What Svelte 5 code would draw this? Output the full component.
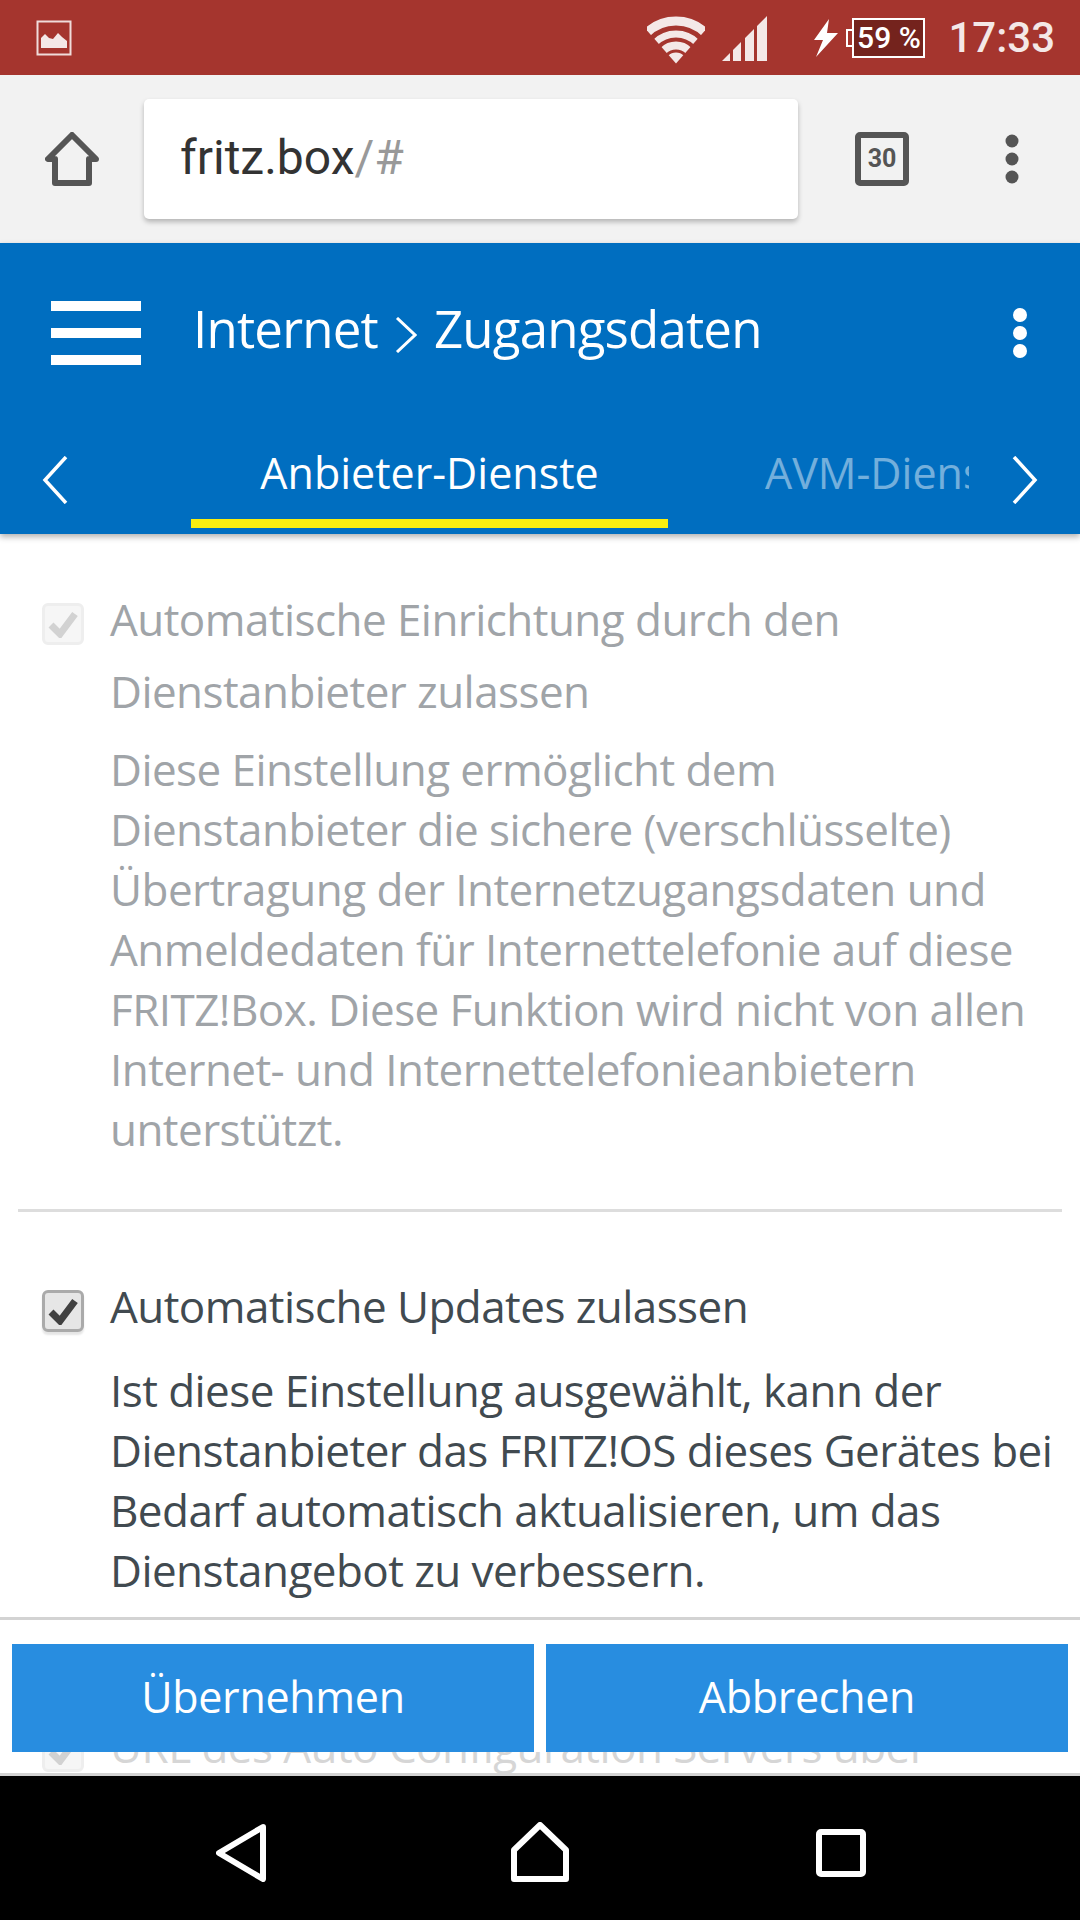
<script>
	const first = [
		'Diese Einstellung ermöglicht dem',
		'Dienstanbieter die sichere (verschlüsselte)',
		'Übertragung der Internetzugangsdaten und',
		'Anmeldedaten für Internettelefonie auf diese',
		'FRITZ!Box. Diese Funktion wird nicht von allen',
		'Internet- und Internettelefonieanbietern',
		'unterstützt.'
	];
	const second = [
		'Ist diese Einstellung ausgewählt, kann der',
		'Dienstanbieter das FRITZ!OS dieses Gerätes bei',
		'Bedarf automatisch aktualisieren, um das',
		'Dienstangebot zu verbessern.'
	];
</script>

<div class="screen">
	<div class="status">
		<svg class="thumb" width="36" height="36" viewBox="0 0 36 36">
			<rect x="1.500" y="1.500" width="33" height="33" fill="none" stroke="#f0dcda" stroke-width="2" />
			<path d="M5 28V18l4-4 4 4 4 1 5-6 4 4 5 4v7z" fill="#f4e8e7" />
		</svg>
		<svg class="wifi" width="58" height="48" viewBox="0 0 58 48">
			<clipPath id="wedge"><path d="M29 47.500-12 1V-2H70V1z" /></clipPath>
			<g clip-path="url(#wedge)" fill="none" stroke="#f4e8e7">
				<circle cx="29" cy="47.500" r="5.500" stroke-width="11" />
				<circle cx="29" cy="47.500" r="18" stroke-width="8" />
				<circle cx="29" cy="47.500" r="29.500" stroke-width="7" />
				<circle cx="29" cy="47.500" r="42.500" stroke-width="9" />
			</g>
		</svg>
		<svg class="signal" width="45" height="45" viewBox="0 0 45 45">
			<path d="M0 45 8 37V45zM11 34l8-8V45H11zM23 22l9-9V45H23zM35 10 45 0V45H35z" fill="#f4e8e7" />
		</svg>
		<svg class="bolt" width="24" height="38" viewBox="0 0 24 38">
			<path d="M15 0 0 21h9L2 38 24 14H13z" fill="#fff" />
		</svg>
		<div class="battery">
			<span class="nub"></span>
			<span class="cell">59 %</span>
		</div>
		<span class="time">17:33</span>
	</div>

	<div class="browser">
		<svg class="home" width="54" height="54" viewBox="0 0 54 54">
			<path d="M27 3 3 27h7v24h34V27h7z" fill="none" stroke="#555" stroke-width="6" stroke-linejoin="round" />
		</svg>
		<div class="url"><span>fritz.box</span><span class="rest">/#</span></div>
		<div class="tabs">30</div>
		<svg class="more" width="14" height="50" viewBox="0 0 14 50">
			<circle cx="7" cy="7" r="6.500" /><circle cx="7" cy="25" r="6.500" /><circle cx="7" cy="43" r="6.500" />
		</svg>
	</div>

	<header class="appbar">
		<div class="titlerow">
			<div class="burger"><i></i><i></i><i></i></div>
			<h1>
				<span>Internet</span>
				<svg class="crumb" width="22" height="36" viewBox="0 0 22 36"><path d="M2 1 20 18 2 35" fill="none" stroke="#fff" stroke-width="3" /></svg>
				<span>Zugangsdaten</span>
			</h1>
			<svg class="dots" width="14" height="50" viewBox="0 0 14 50" fill="#fff">
				<circle cx="7" cy="7" r="7" /><circle cx="7" cy="25" r="7" /><circle cx="7" cy="43" r="7" />
			</svg>
		</div>
		<div class="tabrow">
			<svg width="26" height="48" viewBox="0 0 26 48"><path d="M24 1 3 24l21 23" fill="none" stroke="#fff" stroke-width="3.500" /></svg>
			<div class="tablist">
				<div class="tab active">Anbieter-Dienste</div>
				<div class="tab next">AVM-Dienste</div>
			</div>
			<svg width="26" height="48" viewBox="0 0 26 48"><path d="M2 1l21 23L2 47" fill="none" stroke="#fff" stroke-width="3.500" /></svg>
		</div>
	</header>

	<main>
		<section class="off">
			<div class="option">
				<span class="box"><svg width="30" height="28" viewBox="0 0 30 28"><path d="M3 15l9 9L27 4" fill="none" stroke="currentColor" stroke-width="7" /></svg></span>
				<span class="label">Automatische Einrichtung durch den<br />Dienstanbieter zulassen</span>
			</div>
			<div class="desc">
				{#each first as line}<div>{line}</div>{/each}
			</div>
		</section>
		<hr />
		<section class="on">
			<div class="option">
				<span class="box"><svg width="30" height="28" viewBox="0 0 30 28"><path d="M3 15l9 9L27 4" fill="none" stroke="currentColor" stroke-width="7" /></svg></span>
				<span class="label">Automatische Updates zulassen</span>
			</div>
			<div class="desc">
				{#each second as line}<div>{line}</div>{/each}
			</div>
		</section>
		<section class="off third">
			<div class="option">
				<span class="box"><svg width="30" height="28" viewBox="0 0 30 28"><path d="M3 15l9 9L27 4" fill="none" stroke="currentColor" stroke-width="7" /></svg></span>
				<span class="label">URL des Auto Configuration Servers über</span>
			</div>
		</section>

		<div class="footer">
			<button>Übernehmen</button>
			<button>Abbrechen</button>
		</div>
	</main>

	<nav>
		<svg width="50" height="58" viewBox="0 0 50 58"><path d="M47 3 3 29l44 26z" fill="none" stroke="#fff" stroke-width="6" stroke-linejoin="round" /></svg>
		<svg width="58" height="60" viewBox="0 0 58 60"><path d="M29 3 3 28v29h52V28z" fill="none" stroke="#fff" stroke-width="6" stroke-linejoin="round" /></svg>
		<svg width="50" height="48" viewBox="0 0 50 48"><rect x="3" y="3" width="44" height="42" rx="2" fill="none" stroke="#fff" stroke-width="6" /></svg>
	</nav>
</div>

<style>
	:global(body) {
		margin: 0;
		background: #fff;
	}
	.screen {
		width: 1080px;
		height: 1920px;
		display: flex;
		flex-direction: column;
		overflow: hidden;
		font-family: 'Open Sans', 'Liberation Sans', sans-serif;
	}
	.status {
		height: 75px;
		flex: none;
		background: #a5352e;
		display: flex;
		align-items: center;
		padding: 0 25px 0 36px;
		box-sizing: border-box;
		font-family: Roboto, sans-serif;
	}
	.thumb {
		margin-right: auto;
	}
	.signal {
		margin-left: 17px;
		margin-top: 2px;
	}
	.wifi {
		margin-top: 5px;
	}
	.bolt {
		margin-left: 47px;
	}
	.battery {
		display: flex;
		align-items: center;
		margin-left: 8px;
	}
	.nub {
		width: 6px;
		height: 18px;
		border: 2px solid #fff;
		border-right: 0;
		box-sizing: border-box;
	}
	.cell {
		width: 73px;
		height: 40px;
		box-sizing: border-box;
		border: 2px solid #fff;
		background: #74231d;
		color: #fff;
		font-size: 30px;
		font-weight: 500;
		line-height: 36px;
		text-align: center;
		white-space: nowrap;
	}
	.time {
		margin-left: 23px;
		font-size: 42px;
		font-weight: 500;
		color: #f4e8e7;
	}
	.browser {
		height: 168px;
		flex: none;
		background: #f2f2f2;
		display: flex;
		align-items: center;
		padding-left: 45px;
		box-sizing: border-box;
		font-family: Roboto, sans-serif;
	}
	.url {
		width: 654px;
		height: 120px;
		margin-left: 45px;
		padding-left: 36px;
		box-sizing: border-box;
		background: #fff;
		border-radius: 5px;
		box-shadow: 0 3px 5px rgba(0, 0, 0, 0.25);
		font-size: 48px;
		line-height: 118px;
		color: #333;
	}
	.rest {
		color: #999;
	}
	.tabs {
		width: 54px;
		height: 54px;
		margin-left: 57px;
		box-sizing: border-box;
		border: 6px solid #555;
		border-radius: 5px;
		color: #555;
		font-size: 25px;
		font-weight: 700;
		line-height: 42px;
		text-align: center;
	}
	.more {
		margin-left: 96px;
		fill: #555;
	}
	.appbar {
		height: 291px;
		flex: none;
		background: #006ec0;
		box-shadow: 0 3px 6px rgba(0, 0, 0, 0.3);
		position: relative;
		z-index: 2;
		color: #fff;
		display: flex;
		flex-direction: column;
	}
	.titlerow {
		height: 180px;
		flex: none;
		display: flex;
		align-items: center;
		padding: 0 53px 0 51px;
	}
	.burger {
		display: flex;
		flex-direction: column;
		gap: 17px;
		width: 90px;
	}
	.burger i {
		height: 10px;
		background: #fff;
	}
	h1 {
		margin: 0 0 10px 52px;
		flex: 1;
		font-size: 51px;
		font-weight: 400;
		letter-spacing: -0.8px;
		line-height: 1;
		display: flex;
		align-items: center;
		gap: 17px;
	}
	.crumb {
		margin-top: 14px;
	}
	.tabrow {
		flex: 1;
		display: flex;
		align-items: flex-start;
		padding: 0 42px;
	}
	.tabrow svg {
		flex: none;
		margin-top: 33px;
	}
	.tablist {
		flex: 1;
		min-width: 0;
		display: flex;
		overflow: hidden;
		margin: 0 43px 0 123px;
		height: 105px;
	}
	.tab {
		font-size: 43px;
		line-height: 100px;
		flex: none;
		white-space: nowrap;
	}
	.active {
		width: 477px;
		height: 96px;
		text-align: center;
		border-bottom: 9px solid #f8ee10;
	}
	.next {
		margin-left: 97px;
		opacity: 0.45;
	}
	main {
		flex: 1;
		position: relative;
		overflow: hidden;
		padding-top: 49px;
		font-size: 44px;
		letter-spacing: -0.55px;
		color: #414a50;
	}
	section {
		padding: 0 0 0 110px;
	}
	.off {
		color: #a0a4a8;
	}
	.option {
		position: relative;
		line-height: 72px;
		white-space: nowrap;
	}
	.off .option {
		margin-bottom: 12px;
	}
	.on .option {
		margin-bottom: 18px;
	}
	.box {
		position: absolute;
		left: -68px;
		top: 20px;
		width: 42px;
		height: 42px;
		box-sizing: border-box;
		border: 3px solid #aaa;
		border-radius: 6px;
		background: #e6e6e6;
		color: #414141;
		display: flex;
		align-items: center;
		justify-content: center;
		box-shadow: 0 3px 2px rgba(0, 0, 0, 0.1);
	}
	.off .box {
		border-color: #eee;
		background: #f6f6f6;
		color: #d2d2d2;
		box-shadow: none;
	}
	.desc {
		line-height: 60px;
		white-space: nowrap;
	}
	hr {
		margin: 50px 18px 58px;
		border: 0;
		height: 3px;
		background: #ddd;
	}
	.third {
		margin-top: 110px;
		color: #d6d6d6;
	}
	.footer {
		position: absolute;
		left: 0;
		right: 0;
		bottom: 24px;
		height: 135px;
		padding: 24px 12px 0;
		box-sizing: border-box;
		background: #fff;
		border-top: 3px solid #d3d3d3;
		display: flex;
		gap: 12px;
	}
	.footer button {
		flex: 1;
		height: 108px;
		padding: 0 0 4px;
		border: 0;
		background: #288de0;
		color: #fff;
		font-family: inherit;
		font-size: 43px;
		letter-spacing: -0.3px;
	}
	main::after {
		content: '';
		position: absolute;
		left: 0;
		right: 0;
		bottom: 0;
		height: 3px;
		background: #d3d3d3;
	}
	nav {
		height: 144px;
		flex: none;
		background: #000;
		display: flex;
		align-items: center;
	}
	nav svg:nth-child(1) {
		margin-left: 216px;
		margin-top: 10px;
	}
	nav svg:nth-child(2) {
		margin-left: 245px;
		margin-top: 8px;
	}
	nav svg:nth-child(3) {
		margin-left: 247px;
		margin-top: 10px;
	}
</style>
